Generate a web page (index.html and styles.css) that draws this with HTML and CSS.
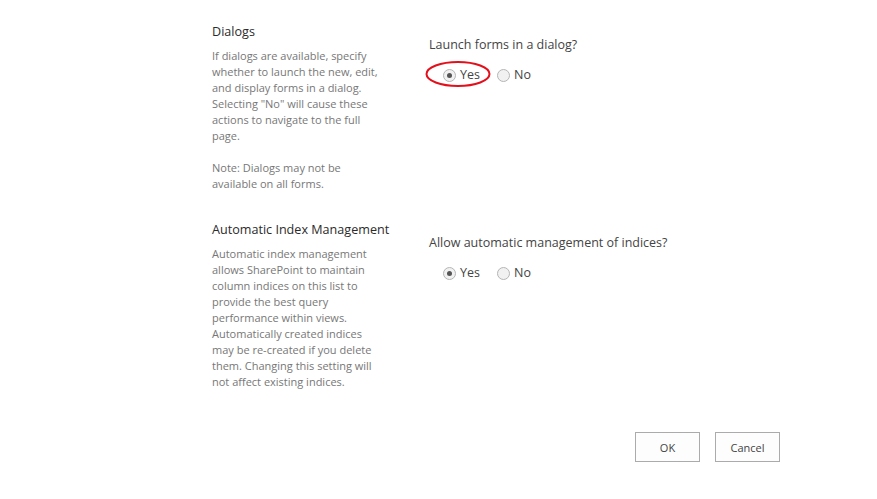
FILE: index.html
```html
<!DOCTYPE html>
<html lang="en">
<head>
	<meta charset="UTF-8" />
	<title>List settings - Advanced</title>
	<link rel="stylesheet" href="styles.css">
</head>
<body>
	<div class="page">
		<div class="section">
			<div class="sideInfo">
				<div class="title">Dialogs</div>
				<div class="desc">If dialogs are available, specify whether to launch the new, edit, and display forms in a dialog. Selecting "No" will cause these actions to navigate to the full page.</div>
				<div class="desc">&nbsp;</div>
				<div class="desc">Note: Dialogs may not be available on all forms.</div>
			</div>
			<div class="field">
				<div class="label">Launch forms in a dialog?</div>
				<div class="choices">
					<span class="choice marked">
						<span class="radio checked"></span><span>Yes</span>
						<svg class="ring" width="68" height="30" viewBox="0 0 68 30"><ellipse cx="34" cy="15" rx="31.5" ry="12" fill="none" stroke="#e3101c" stroke-width="2"/></svg>
					</span>
					<span class="choice"><span class="radio"></span><span>No</span></span>
				</div>
			</div>
		</div>
		<div class="section">
			<div class="sideInfo">
				<div class="title">Automatic Index Management</div>
				<div class="desc">Automatic index management allows SharePoint to maintain column indices on this list to provide the best query performance within views. Automatically created indices may be re-created if you delete them. Changing this setting will not affect existing indices.</div>
			</div>
			<div class="field">
				<div class="label">Allow automatic management of indices?</div>
				<div class="choices">
					<span class="choice"><span class="radio checked"></span><span>Yes</span></span>
					<span class="choice"><span class="radio"></span><span>No</span></span>
				</div>
			</div>
		</div>
		<div class="buttons">
			<button type="button" class="btn">OK</button>
			<button type="button" class="btn">Cancel</button>
		</div>
	</div>
</body>
</html>
```

FILE: styles.css
```css
body,div,span,button {
	margin: 0;
	padding: 0;
}
body {
	background-color: #fff;
	font-family: "Open Sans", "Noto Sans", sans-serif;
	color: #444;
}
.page {
	padding: 22px 97px 0 212px;
}
.section {
	display: flex;
	gap: 45px;
	margin-bottom: 28px;
}
.sideInfo {
	width: 172px;
	flex: none;
}
.title {
	font-size: 12.6px;
	line-height: 20px;
	color: #2b2b2b;
	margin-bottom: 6px;
	white-space: nowrap;
}
.desc {
	font-size: 11px;
	line-height: 16px;
	color: #777;
}
.field {
	padding-top: 14px;
}
.label {
	font-size: 12.5px;
	line-height: 18px;
	color: #444;
}
.choices {
	display: flex;
	gap: 17px;
	margin: 13px 0 0 14px;
	font-size: 12.5px;
	line-height: 16px;
	color: #444;
}
.choice {
	display: flex;
	align-items: center;
	gap: 4px;
	position: relative;
}
.radio {
	width: 11px;
	height: 11px;
	border: 1px solid #b5b5b5;
	border-radius: 50%;
	background-color: #f1f1f1;
	position: relative;
}
.radio.checked::after {
	content: "";
	position: absolute;
	left: 3px;
	top: 3px;
	width: 5px;
	height: 5px;
	border-radius: 50%;
	background-color: #555;
}
.ring {
	position: absolute;
	left: -19px;
	top: -8px;
}
.buttons {
	display: flex;
	justify-content: flex-end;
	gap: 15px;
	margin-top: 42px;
}
.btn {
	width: 65px;
	height: 30px;
	border: 1px solid #ababab;
	background-color: #fdfdfd;
	font-family: "Open Sans", "Noto Sans", sans-serif;
	font-size: 11px;
	color: #444;
}
```
